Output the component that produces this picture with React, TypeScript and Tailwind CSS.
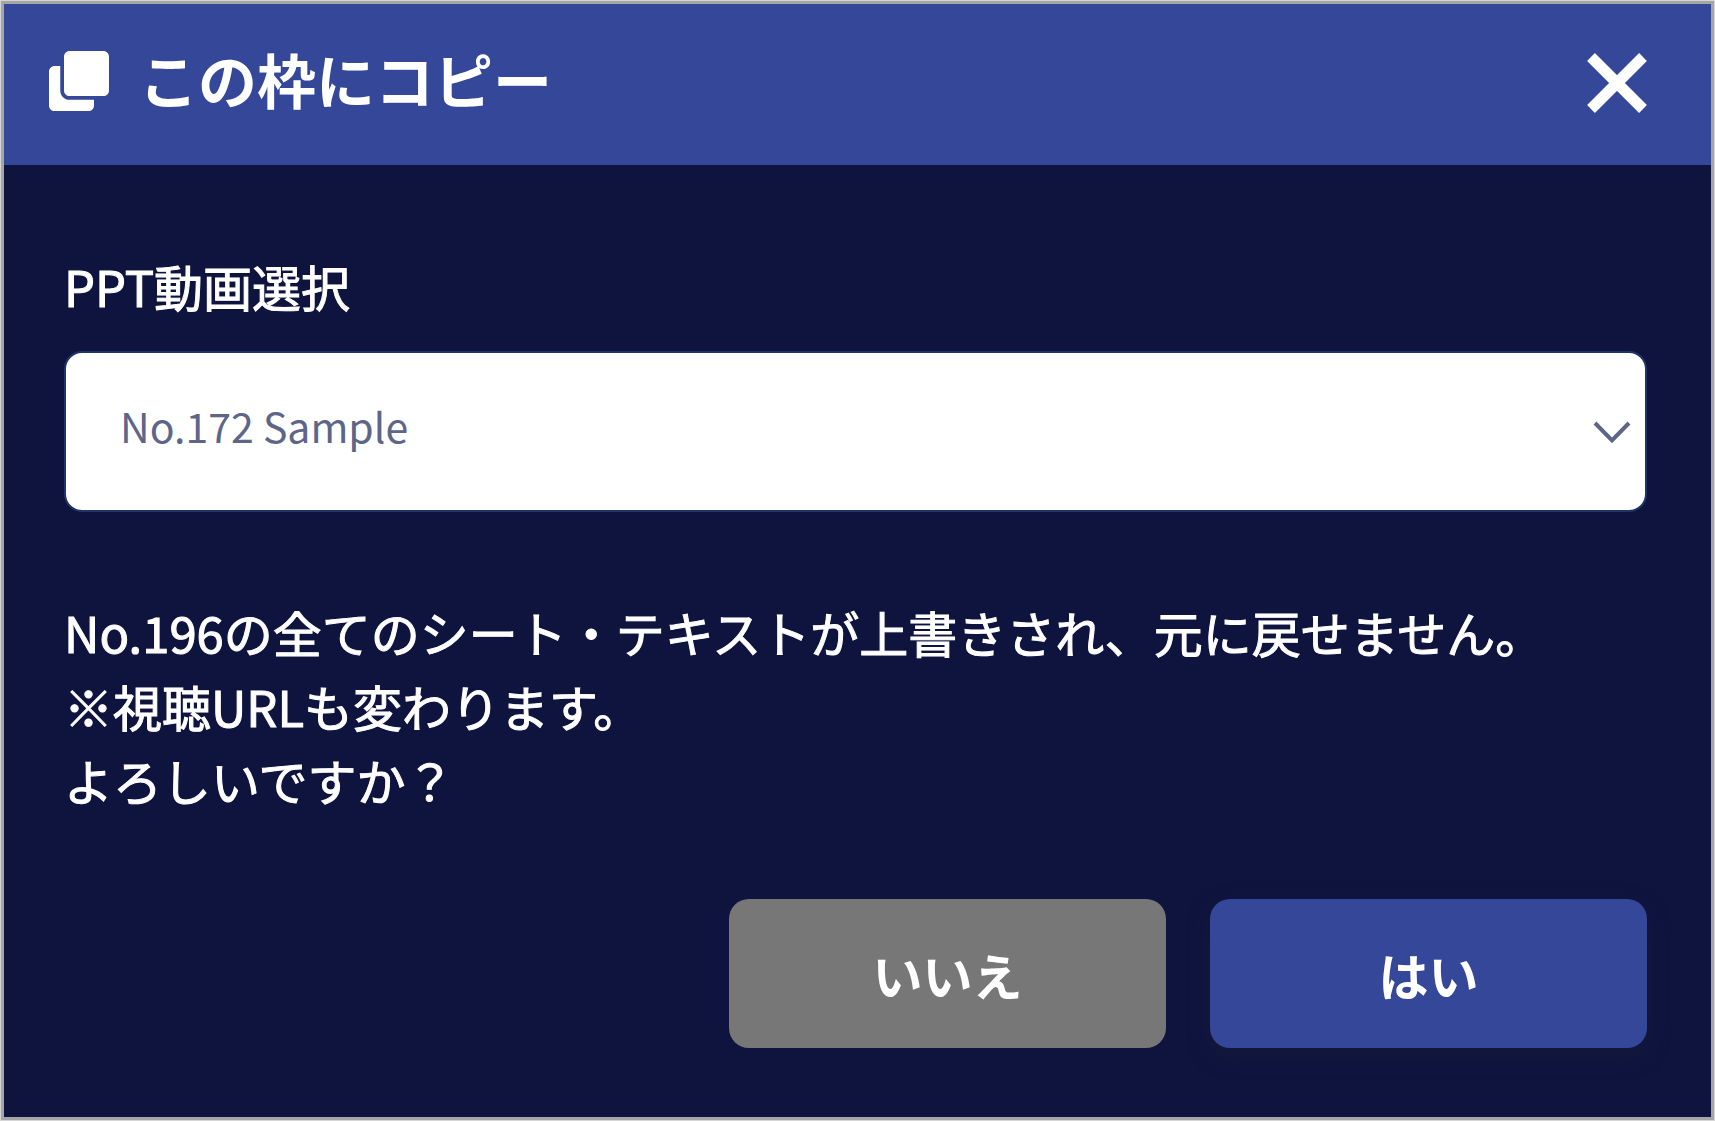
import { useState } from "react";

function CloneIcon() {
  return (
    <svg viewBox="0 0 512 512" className="size-15 shrink-0" fill="currentColor" aria-hidden="true">
      <path d="M464 0c26.51 0 48 21.49 48 48v288c0 26.51-21.49 48-48 48H176c-26.51 0-48-21.49-48-48V48c0-26.51 21.49-48 48-48h288M176 416c-44.112 0-80-35.888-80-80V128H48c-26.51 0-48 21.49-48 48v288c0 26.51 21.49 48 48 48h288c26.51 0 48-21.49 48-48v-48H176z" />
    </svg>
  );
}

function CloseIcon() {
  return (
    <svg viewBox="0 0 60 60" className="size-15" fill="none" stroke="currentColor" strokeWidth="11" aria-hidden="true">
      <path d="M4 4 56 56M56 4 4 56" />
    </svg>
  );
}

function ChevronIcon() {
  return (
    <svg
      viewBox="0 0 38 23"
      className="pointer-events-none absolute top-[70px] right-4 w-[38px]"
      fill="none"
      stroke="#5d6688"
      strokeWidth="4"
      aria-hidden="true"
    >
      <path d="M2 2 19 19.5 36 2" />
    </svg>
  );
}

export default function App() {
  const [video, setVideo] = useState("172");

  return (
    <div
      role="dialog"
      aria-labelledby="dialog-title"
      className="flex min-h-screen flex-col border border-[#d6d6d6] bg-[#0f143f] font-['Noto_Sans_CJK_JP',sans-serif] text-white"
    >
      <div className="flex grow flex-col border-3 border-[#a6a6a6]">
        <header className="flex items-start justify-between bg-[#344798] pt-8 pr-16 pb-11 pl-[45px]">
          <div className="flex items-start gap-[30px]">
            <div className="pt-[15px]">
              <CloneIcon />
            </div>
            <h1 id="dialog-title" className="text-[59px] leading-[85px] font-bold">
              この枠にコピー
            </h1>
          </div>
          <button type="button" aria-label="閉じる" className="mt-[17px] cursor-pointer">
            <CloseIcon />
          </button>
        </header>

        <form className="flex flex-col pt-[84px] pr-16 pl-15" onSubmit={(e) => e.preventDefault()}>
          <label htmlFor="video" className="text-[49px] leading-[74px] font-normal [-webkit-text-stroke:1px_white]">
            PPT動画選択
          </label>
          <div className="relative mt-7">
            <select
              id="video"
              value={video}
              onChange={(e) => setVideo(e.target.value)}
              className="block h-[161px] w-full appearance-none rounded-[18px] border-2 border-[#203565] bg-white pr-16 pb-3 pl-[54px] text-[41px] font-normal text-[#5d6688]"
            >
              <option value="172">No.172 Sample</option>
            </select>
            <ChevronIcon />
          </div>

          <p className="mt-[83px] text-[49px] leading-[74px] font-normal [-webkit-text-stroke:1px_white]">
            No.196の全てのシート・テキストが上書きされ、元に戻せません。
            <br />
            ※視聴URLも変わります。
            <br />
            よろしいですか？
          </p>

          <div className="mt-[82px] flex justify-end gap-11 text-[50px] leading-[74px] font-bold">
            <button type="button" className="h-[149px] w-[437px] cursor-pointer rounded-[20px] bg-[#777777]">
              いいえ
            </button>
            <button
              type="submit"
              className="h-[149px] w-[437px] cursor-pointer rounded-[20px] bg-[#344798] shadow-[0_8px_20px_#13193a]"
            >
              はい
            </button>
          </div>
        </form>
      </div>
    </div>
  );
}
